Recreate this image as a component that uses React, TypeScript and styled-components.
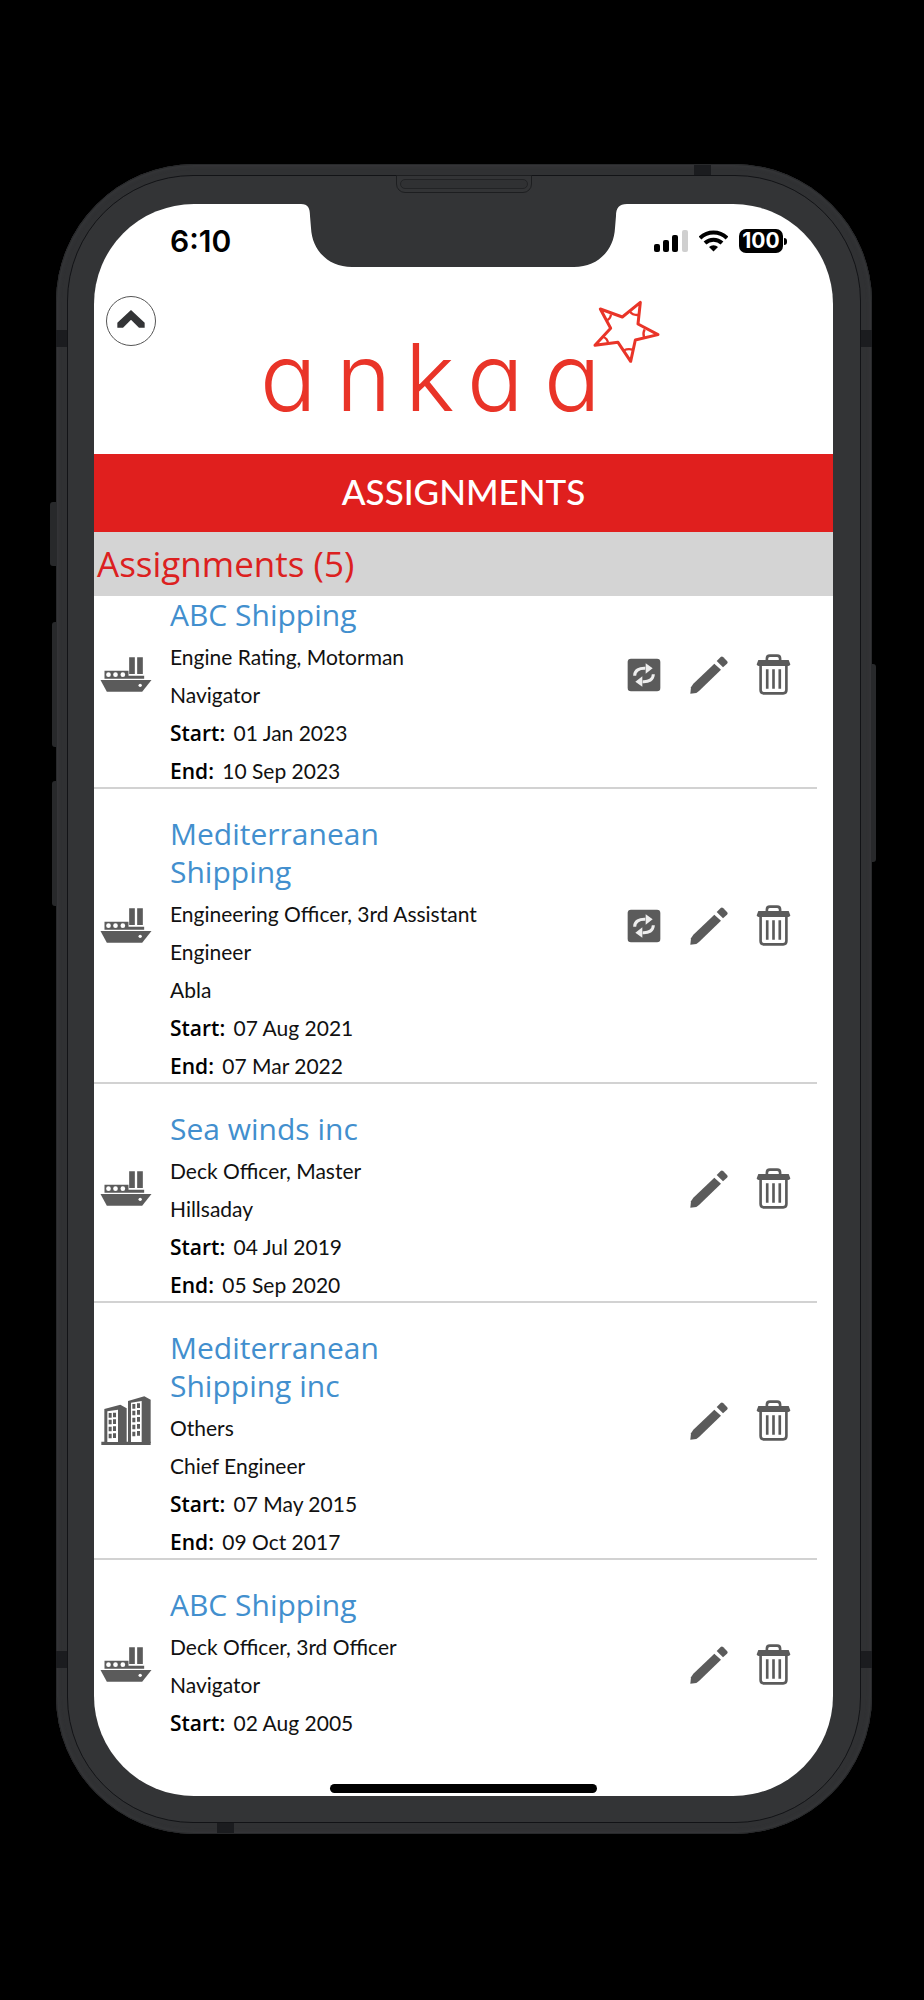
import React from "react";
import styled, { createGlobalStyle } from "styled-components";

const GlobalStyle = createGlobalStyle`
  *, *::before, *::after { box-sizing: border-box; }
  body { margin: 0; background: #000; font-family: Lato, "Open Sans", sans-serif; color: #111; }
  h1, h2, h3, p, ul, dl, dd { margin: 0; padding: 0; }
  svg { display: block; }
`;

const Stage = styled.main`
  padding: 164px 52px 166px 56px;
  background: #000;
`;

const Phone = styled.div`
  position: relative;
  padding: 11px;
  border-radius: 138px;
  background: #303133;
  box-shadow: inset 0 0 0 1px #28292b, inset 0 0 4px 1px #3a3b3d;
`;

const Bezel = styled.div`
  position: relative;
  padding: 28px 27px 26px 26px;
  border: 1px solid #121316;
  border-radius: 126px;
  background: #333436;
`;

const Screen = styled.div`
  position: relative;
  min-height: 1592px;
  border-radius: 100px;
  background: #fff;
  overflow: hidden;
`;

const SideButton = styled.span<{ $side: "left" | "right"; $top: number; $height: number; $depth: number }>`
  position: absolute;
  ${(p) => p.$side}: -${(p) => p.$depth}px;
  top: ${(p) => p.$top}px;
  width: ${(p) => p.$depth}px;
  height: ${(p) => p.$height}px;
  border-radius: ${(p) => (p.$side === "left" ? "3px 0 0 3px" : "0 3px 3px 0")};
  background: #28292b;
`;

const SideBand = styled.span<{ $side: "left" | "right"; $end: "top" | "bottom" }>`
  position: absolute;
  ${(p) => p.$side}: 0;
  ${(p) => p.$end}: 166px;
  width: 11px;
  height: 17px;
  background: #1b1c1f;
`;

const EdgeBand = styled.span<{ $edge: "top" | "bottom"; $side: "left" | "right" }>`
  position: absolute;
  ${(p) => p.$edge}: 1px;
  ${(p) => p.$side}: 161px;
  width: 17px;
  height: 10px;
  background: #1b1c1f;
`;

const Speaker = styled.span`
  position: absolute;
  top: -1px;
  left: 50%;
  width: 136px;
  height: 18px;
  margin-left: -68px;
  padding: 3px;
  border: 1px solid #1d1e20;
  border-radius: 0 0 9px 9px;

  &::before {
    content: "";
    display: block;
    height: 10px;
    border: 1px solid #222325;
    border-radius: 5px;
    background: #303133;
  }
`;

const NotchShape = styled.svg`
  position: absolute;
  top: 0;
  left: 50%;
  margin-left: -163px;
`;

const StatusBar = styled.div`
  display: flex;
  align-items: center;
  justify-content: space-between;
  height: 74px;
  padding: 0 46px 0 76px;
`;

const Time = styled.span`
  font: 600 30px/30px Inter, sans-serif;
  color: #000;
`;

const StatusIcons = styled.div`
  display: flex;
  align-items: center;
  gap: 11px;
`;

const Battery = styled.span`
  display: flex;
  align-items: center;
  gap: 1px;

  &::after {
    content: "";
    width: 3px;
    height: 7px;
    border-radius: 0 3px 3px 0;
    background: #000;
  }
`;

const BatteryLevel = styled.span`
  width: 44px;
  height: 24px;
  border-radius: 7px;
  background: #000;
  color: #fff;
  font: 700 21px/24px Inter, sans-serif;
  text-align: center;
`;

const Brand = styled.header`
  display: grid;
  grid-template-columns: 50px 1fr 50px;
  height: 176px;
  padding: 18px 12px 0;
`;

const UpButton = styled.button`
  display: flex;
  align-items: center;
  justify-content: center;
  width: 50px;
  height: 50px;
  padding: 0 0 4px;
  border: 1px solid #555;
  border-radius: 50%;
  background: #fff;
`;

const Logo = styled.svg`
  justify-self: center;
  margin-top: 5px;
  overflow: visible;
`;

const LogoText = styled.text`
  font-family: Inter, sans-serif;
  font-size: 94px;
  font-weight: 350;
  font-feature-settings: "cv11" 1;
  fill: #e93428;
`;

const PageTitle = styled.h1`
  height: 78px;
  background: #e01f1e;
  color: #fff;
  font-size: 35px;
  font-weight: 500;
  line-height: 74px;
  text-align: center;
`;

const SectionTitle = styled.h2`
  height: 64px;
  padding-left: 3px;
  background: #d4d4d4;
  color: #dc2020;
  font-family: "Open Sans", sans-serif;
  font-size: 35px;
  font-weight: 500;
  line-height: 64px;
`;

const List = styled.ul`
  margin-right: 16px;
  list-style: none;
`;

const Row = styled.li`
  display: grid;
  grid-template-columns: 76px minmax(0, 330px) 1fr;
  padding-top: 26px;
  border-bottom: 2px solid #d2d2d2;

  &:first-child { padding-top: 0; }
  &:last-child { border-bottom: 0; min-height: 217px; }
`;

const Details = styled.div`
  margin-bottom: -3px;
`;

const Centered = styled.div<{ $tall: boolean }>`
  display: flex;
  align-items: center;
  padding-bottom: ${(p) => (p.$tall ? 46 : 34)}px;
`;

const KindCell = styled(Centered)`
  padding-left: 6px;
`;

const Actions = styled(Centered)`
  justify-content: flex-end;
  padding-right: 11px;
`;

const IconButton = styled.button`
  display: flex;
  align-items: center;
  justify-content: center;
  width: 65px;
  height: 48px;
  padding: 0;
  border: 0;
  background: none;
`;

const Company = styled.h3`
  max-width: 300px;
  margin-bottom: 4px;
  font-family: "Open Sans", sans-serif;
  font-size: 30px;
  font-weight: 500;
  line-height: 38px;
`;

const CompanyLink = styled.a`
  color: #428fce;
  text-decoration: none;
`;

const Line = styled.p`
  font-size: 21px;
  line-height: 38px;
`;

const Term = styled.strong`
  margin-right: 3px;
  font-family: "Open Sans", sans-serif;
  font-weight: 600;
  color: #000;
`;

const HomeIndicator = styled.span`
  position: absolute;
  bottom: 3px;
  left: 32%;
  right: 32%;
  height: 9px;
  border-radius: 5px;
  background: #000;
`;

const GREY = "#5b5b5b";

const Ship = () => (
  <svg width="52" height="35" viewBox="180 532 155 105" fill={GREY} role="img" aria-label="Ship">
    <path d="M193 573h72v15h47v9H193z" />
    <path d="M267 533h17v50h-17zM291 533h17v50h-17z" />
    <path d="M181 601h153l-28 35H200z" />
    <g fill="#fff">
      <circle cx="205" cy="585" r="7" />
      <circle cx="226" cy="585" r="7" />
      <circle cx="248" cy="585" r="7" />
      <circle cx="300" cy="617" r="5" />
    </g>
  </svg>
);

const Building = () => (
  <svg width="52" height="50" viewBox="61 168 156 150" fill={GREY} role="img" aria-label="Office">
    <path d="M65 305h148v10H65z" />
    <path d="M74 207l48-13 19 11v103H74z" />
    <path d="M145 183l49-14 19 10v130h-68z" />
    <path fill="#fff" d="M83 214l32-5v97H83zM154 188l32-5v123h-32z" />
    {[219, 239, 260, 281].map((y) => (
      <path key={y} d={`M87 ${y}h9v14h-9zM100 ${y - 1}h9v14h-9z`} />
    ))}
    {[192, 212, 233, 254, 275].map((y) => (
      <path key={y} d={`M158 ${y}h9v14h-9zM172 ${y - 2}h9v14h-9z`} />
    ))}
  </svg>
);

const Refresh = () => (
  <svg width="34" height="34" viewBox="200 651 102 102">
    <rect x="202" y="653" width="98" height="98" rx="10" fill={GREY} />
    <path d="M223 704c0-16 14-23 32-22M279 700c0 16-14 23-32 22" fill="none" stroke="#eee" strokeWidth="9" />
    <path d="M256 667l21 15-21 16zM246 706l-21 16 21 15z" fill="#eee" />
  </svg>
);

const Pencil = () => (
  <svg width="38" height="38" viewBox="389 644 114 114" fill={GREY}>
    <path d="M390 757l2-19 7-11 63-60 20 18-66 64-8 6z" />
    <path d="M469 659l12-12q4-3 8 1l11 11q4 4 0 8l-12 11z" />
  </svg>
);

const Trash = () => (
  <svg width="35" height="41" viewBox="588 640 104 124" fill="none" stroke={GREY} strokeWidth="8">
    <path d="M620 660v-6q0-9 9-9h22q9 0 9 9v6" />
    <path d="M594 658h92l5 14q-2 4-6 4h-90q-4 0-6-4z" fill={GREY} stroke="none" />
    <path d="M601 674v75q0 10 10 10h58q10 0 10-10v-75" />
    <path d="M621 686v59M640 686v59M659 686v59" />
  </svg>
);

const Signal = () => (
  <svg width="34" height="22" viewBox="0 0 34 22" aria-label="Signal" role="img">
    <rect y="14" width="6" height="8" rx="2" />
    <rect x="9" y="10" width="6" height="12" rx="2" />
    <rect x="18" y="5" width="6" height="17" rx="2" />
    <rect x="28" width="6" height="22" rx="2" fill="#cfcfcf" />
  </svg>
);

const Wifi = () => (
  <svg width="29" height="22" viewBox="0 0 29 22" aria-label="Wi-Fi" role="img">
    <path d="M1 8a19.500 19.500 0 0 1 27 0" fill="none" stroke="#000" strokeWidth="4" />
    <path d="M6 13a12.500 12.500 0 0 1 17 0" fill="none" stroke="#000" strokeWidth="4" />
    <path d="M14.500 21.500l-4.500-4.500a6.500 6.500 0 0 1 9 0z" />
  </svg>
);

const AnkaaLogo = () => (
  <Logo width="402" height="113" viewBox="262 301 402 113" role="img" aria-label="ankaa">
    <LogoText x="259 335 404 466 543" y="411">ankaa</LogoText>
    <g transform="translate(459 150) scale(.33333)" fill="none" stroke="#e93428" strokeWidth="9" strokeLinejoin="round">
      <path d="M421 477l66 24 54-44-7 65 60 32-68 16-14 64-38-57-69 9 47-51z" />
      <path strokeWidth="7" d="M438 511q13-2 15-18M510 485q8 11 24 10M554 538q-6 10-2 24M492 601q12-6 26-2M430 561q13 5 14 19" />
    </g>
  </Logo>
);

type Assignment = {
  kind: "ship" | "office";
  company: string;
  lines: string[];
  start: string;
  end?: string;
  renewable?: boolean;
};

const assignments: Assignment[] = [
  { kind: "ship", company: "ABC Shipping", lines: ["Engine Rating, Motorman", "Navigator"], start: "01 Jan 2023", end: "10 Sep 2023", renewable: true },
  { kind: "ship", company: "Mediterranean Shipping", lines: ["Engineering Officer, 3rd Assistant Engineer", "Abla"], start: "07 Aug 2021", end: "07 Mar 2022", renewable: true },
  { kind: "ship", company: "Sea winds inc", lines: ["Deck Officer, Master", "Hillsaday"], start: "04 Jul 2019", end: "05 Sep 2020" },
  { kind: "office", company: "Mediterranean Shipping inc", lines: ["Others", "Chief Engineer"], start: "07 May 2015", end: "09 Oct 2017" },
  { kind: "ship", company: "ABC Shipping", lines: ["Deck Officer, 3rd Officer", "Navigator"], start: "02 Aug 2005" },
];

const AssignmentRow = ({ item }: { item: Assignment }) => {
  const tall = item.company.length > 14;
  return (
    <Row>
      <KindCell $tall={tall}>{item.kind === "ship" ? <Ship /> : <Building />}</KindCell>
      <Details>
        <Company>
          <CompanyLink href="#">{item.company}</CompanyLink>
        </Company>
        {item.lines.map((line) => (
          <Line key={line}>{line}</Line>
        ))}
        <Line><Term>Start:</Term> {item.start}</Line>
        {item.end && <Line><Term>End:</Term> {item.end}</Line>}
      </Details>
      <Actions $tall={tall}>
        {item.renewable && <IconButton aria-label="Renew"><Refresh /></IconButton>}
        <IconButton aria-label="Edit"><Pencil /></IconButton>
        <IconButton aria-label="Delete"><Trash /></IconButton>
      </Actions>
    </Row>
  );
};

export default function App() {
  return (
    <>
      <GlobalStyle />
      <Stage>
        <Phone>
          <SideButton $side="left" $top={338} $height={64} $depth={6} />
          <SideButton $side="left" $top={458} $height={125} $depth={4} />
          <SideButton $side="left" $top={617} $height={125} $depth={4} />
          <SideButton $side="right" $top={500} $height={198} $depth={4} />
          <SideBand $side="left" $end="top" />
          <SideBand $side="right" $end="top" />
          <SideBand $side="left" $end="bottom" />
          <SideBand $side="right" $end="bottom" />
          <EdgeBand $edge="top" $side="right" />
          <EdgeBand $edge="bottom" $side="left" />
          <Bezel>
            <Speaker />
            <Screen>
              <NotchShape width="326" height="64" viewBox="0 0 326 64" fill="#333436">
                <path d="M0 0c7 0 9 4 9 12l1 12c1 22 17 39 41 39h222c24 0 40-17 41-39l1-12c0-8 3-12 11-12z" />
              </NotchShape>
              <StatusBar>
                <Time>6:10</Time>
                <StatusIcons>
                  <Signal />
                  <Wifi />
                  <Battery><BatteryLevel>100</BatteryLevel></Battery>
                </StatusIcons>
              </StatusBar>
              <Brand>
                <UpButton aria-label="Back to top">
                  <svg width="28" height="18" viewBox="232 479 84 54" fill="#333436">
                    <path d="M274 479l41 38v15h-17l-24-24-24 24h-17v-15z" />
                  </svg>
                </UpButton>
                <AnkaaLogo />
              </Brand>
              <PageTitle>ASSIGNMENTS</PageTitle>
              <SectionTitle>Assignments (5)</SectionTitle>
              <List>
                {assignments.map((item, i) => (
                  <AssignmentRow key={i} item={item} />
                ))}
              </List>
              <HomeIndicator />
            </Screen>
          </Bezel>
        </Phone>
      </Stage>
    </>
  );
}
